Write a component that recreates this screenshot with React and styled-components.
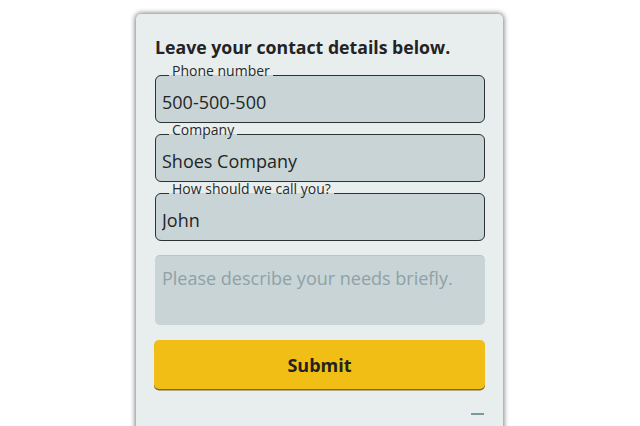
import React from "react";
import styled, { createGlobalStyle } from "styled-components";

const Global = createGlobalStyle`
  html, body { margin: 0; padding: 0; background: #ffffff; }
  body { font-family: "Open Sans", "Noto Sans", sans-serif; overflow: hidden; }
  * { box-sizing: border-box; }
`;

const Page = styled.div`
  width: 640px;
  height: 426px;
  padding-top: 14px;
  display: flex;
  justify-content: center;
  overflow: hidden;
`;

const Card = styled.form`
  width: 367px;
  margin-left: -1px;
  height: 440px;
  background: #e8eeee;
  border-radius: 5px;
  box-shadow: 0 0 5px 1px rgba(0, 0, 0, 0.5);
  padding: 22px 18px 0 18px;
  display: flex;
  flex-direction: column;
`;

const Heading = styled.h2`
  margin: 0 0 0 1px;
  font-size: 17.7px;
  line-height: 22px;
  font-weight: 700;
  color: #232323;
`;

const Field = styled.fieldset`
  margin: ${(p) => p.$top}px 0 0 1px;
  padding: 0 6px 0 5px;
  height: 59px;
  border: 1.75px solid #2e3233;
  border-radius: 6px;
  background: #c9d4d6;
  display: flex;
  min-width: 0;
`;

const Legend = styled.legend`
  margin-left: 8px;
  padding: 0 3px 9px 3px;
  font-size: 14px;
  line-height: 14px;
  color: #2a2a2a;
`;

const Input = styled.input`
  flex: 1;
  width: 100%;
  border: none;
  outline: none;
  background: transparent;
  font-family: inherit;
  font-size: 18px;
  color: #232525;
  padding: 3px 0 0 1px;
  caret-color: #222;
`;

const Area = styled.textarea`
  margin: 14px 0 0 1px;
  height: 70px;
  resize: none;
  border: none;
  border-top: 1px solid #b9c5c8;
  border-radius: 5px;
  background: #c9d4d6;
  font-family: inherit;
  font-size: 18px;
  line-height: 24px;
  padding: 10px 7px;
  color: #262828;
  outline: none;
  &::placeholder { color: #8fa2a7; }
`;

const Submit = styled.button`
  margin: 15px 0 0 0;
  height: 49px;
  border: none;
  border-radius: 5px;
  background: #f0be14;
  box-shadow: 0 1.5px 0 #7c6a28;
  font-family: inherit;
  font-weight: 700;
  font-size: 18px;
  color: #222222;
  cursor: pointer;
`;

const Foot = styled.div`
  display: flex;
  justify-content: flex-end;
  padding: 24px 1px 0 0;
`;

const Dash = styled.span`
  width: 13px;
  height: 2px;
  background: #7f979e;
`;

export default function App() {
  return (
    <>
      <Global />
      <Page>
        <Card onSubmit={(e) => e.preventDefault()}>
          <Heading>Leave your contact details below.</Heading>
          <Field $top={6}>
            <Legend>Phone number</Legend>
            <Input defaultValue="500-500-500" autoFocus />
          </Field>
          <Field $top={0}>
            <Legend>Company</Legend>
            <Input defaultValue="Shoes Company" />
          </Field>
          <Field $top={0}>
            <Legend>How should we call you?</Legend>
            <Input defaultValue="John" />
          </Field>
          <Area placeholder="Please describe your needs briefly." />
          <Submit type="submit">Submit</Submit>
          <Foot>
            <Dash />
          </Foot>
        </Card>
      </Page>
    </>
  );
}
